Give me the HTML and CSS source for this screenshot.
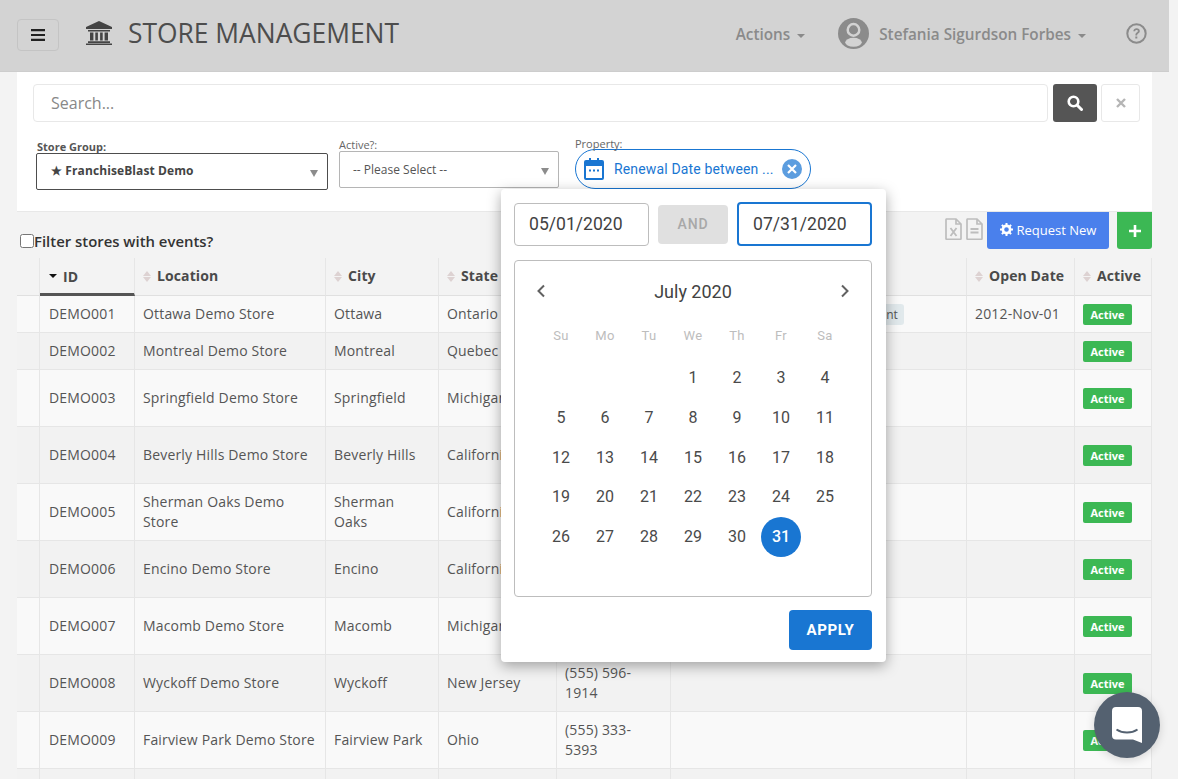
FILE: index.html
```html
<!DOCTYPE html>
<html lang="en">
<head>
<meta charset="utf-8">
<title>Store Management</title>
<link rel="stylesheet" href="styles.css">
</head>
<body>
<div class="page">
  <header class="topbar">
    <button class="menu-btn" type="button" aria-label="Menu">
      <svg width="14" height="12" viewBox="0 0 14 12"><path d="M0 0h14v2.2H0zM0 4.9h14v2.2H0zM0 9.8h14V12H0z" fill="#222"/></svg>
    </button>
    <svg class="bank-icon" width="26" height="24" viewBox="0 0 26 24"><path d="M13 0 26 6v2H0V6zM2 9h22v1.6H2zM4 11.5h3.4v8H4zM9.3 11.5h2.6v8H9.3zM14.1 11.5h2.6v8h-2.6zM18.6 11.5H22v8h-3.4zM2 20.3h22V22H2zM0 22.6h26V24H0z" fill="#444"/></svg>
    <h1 class="title">STORE MANAGEMENT</h1>
    <div class="nav-right">
      <span class="nav-link">Actions <i class="caret"></i></span>
      <span class="user">
        <svg width="31" height="31" viewBox="0 0 30 30"><circle cx="15" cy="15" r="15" fill="#8b8b8b"/><circle cx="15" cy="11.5" r="5.6" fill="none" stroke="#d3d3d3" stroke-width="2.4"/><ellipse cx="15" cy="23.5" rx="8" ry="4.3" fill="#d3d3d3"/></svg>
        <span class="nav-link">Stefania Sigurdson Forbes <i class="caret"></i></span>
      </span>
      <svg class="help" width="21" height="21" viewBox="0 0 21 21"><circle cx="10.5" cy="10.5" r="9.2" fill="none" stroke="#8b8b8b" stroke-width="2"/><path d="M7.3 8.2c.2-1.9 1.5-2.9 3.3-2.9 1.900 0 3.200 1.100 3.200 2.700 0 2.400-2.700 2.400-2.700 4.400H9.400c0-2.900 2.500-2.900 2.500-4.300 0-.7-.5-1.200-1.300-1.200-.9 0-1.300.5-1.500 1.300zM9.300 13.500h2v2.100h-2z" fill="#8b8b8b"/></svg>
    </div>
  </header>

  <section class="filters">
    <div class="search-row">
      <input class="search-input" type="text" placeholder="Search...">
      <button class="search-btn" type="button" aria-label="Search">
        <svg width="16" height="16" viewBox="0 0 16 16"><circle cx="6.500" cy="6.500" r="4.800" fill="none" stroke="#fff" stroke-width="2.600"/><path d="m10 10 4.500 4.500" stroke="#fff" stroke-width="3" stroke-linecap="round"/></svg>
      </button>
      <button class="clear-btn" type="button" aria-label="Clear">
        <svg width="10" height="10" viewBox="0 0 10 10"><path d="m1 1 8 8M9 1 1 9" stroke="#b5b5b5" stroke-width="2.400"/></svg>
      </button>
    </div>
    <div class="filter-row">
      <div class="filter filter-group">
        <label class="filter-label filter-label-bold">Store Group:</label>
        <div class="select select-dark">★ FranchiseBlast Demo<i class="select-caret"></i></div>
      </div>
      <div class="filter filter-active">
        <label class="filter-label">Active?:</label>
        <div class="select select-light">-- Please Select --<i class="select-caret"></i></div>
      </div>
      <div class="filter filter-property">
        <label class="filter-label">Property:</label>
        <div class="chip">
          <svg width="20" height="22" viewBox="0 0 20 22"><path d="M5 0h2v3H5zM13 0h2v3h-2z" fill="#1976d2"/><path d="M2 2h16a2 2 0 0 1 2 2v16a2 2 0 0 1-2 2H2a2 2 0 0 1-2-2V4a2 2 0 0 1 2-2zm0 6v12h16V8zM5 11.500h2v2H5zM9 11.500h2v2H9zM13 11.500h2v2h-2z" fill="#1976d2" fill-rule="evenodd"/></svg>
          <span class="chip-text">Renewal Date between ...</span>
          <span class="chip-close">
            <svg width="10" height="10" viewBox="0 0 10 10"><path d="m1 1 8 8M9 1 1 9" stroke="#fff" stroke-width="2.200"/></svg>
          </span>
        </div>
      </div>
    </div>
  </section>

  <div class="toolbar">
    <label class="event-filter"><input type="checkbox">Filter stores with events?</label>
    <div class="toolbar-actions">
      <svg class="file-icon" width="17" height="22" viewBox="0 0 17 22"><path d="M1.500 1h9.500l5 5v14.500a.8.8 0 0 1-.8.8H1.800a.8.8 0 0 1-.8-.8V1.800a.8.800 0 0 1 .5-.8zM11 1v5h5" fill="none" stroke="#bdbdbd" stroke-width="1.700"/><path d="m5.500 10 6 8M11.500 10l-6 8" stroke="#bdbdbd" stroke-width="1.800"/></svg>
      <svg class="file-icon" width="17" height="22" viewBox="0 0 17 22"><path d="M1.500 1h9.500l5 5v14.500a.8.8 0 0 1-.8.8H1.800a.8.8 0 0 1-.8-.8V1.800a.8.800 0 0 1 .5-.8zM11 1v5h5" fill="none" stroke="#bdbdbd" stroke-width="1.700"/><path d="M4.500 11h8M4.500 14.500h8" stroke="#bdbdbd" stroke-width="1.800"/></svg>
      <button class="request-btn" type="button">
        <svg width="13" height="13" viewBox="0 0 13 13"><circle cx="6.500" cy="6.500" r="3.600" fill="none" stroke="#fff" stroke-width="2.600"/><path d="M6.500 0v13M0 6.500h13M1.900 1.900l9.200 9.200M11.100 1.900l-9.200 9.200" stroke="#fff" stroke-width="2" stroke-dasharray="2.200 8.600"/></svg>
        Request New
      </button>
      <button class="add-btn" type="button" aria-label="Add">
        <svg width="12" height="12" viewBox="0 0 12 12"><path d="M6 0v12M0 6h12" stroke="#fff" stroke-width="2.600"/></svg>
      </button>
    </div>
  </div>

  <table class="stores">
    <colgroup>
      <col class="c0"><col class="c1"><col class="c2"><col class="c3"><col class="c4"><col class="c5"><col class="c6"><col class="c7"><col class="c8">
    </colgroup>
    <thead>
      <tr>
        <th></th>
        <th class="sorted"><i class="sort-down"></i>ID</th>
        <th><i class="sort"></i>Location</th>
        <th><i class="sort"></i>City</th>
        <th><i class="sort"></i>State</th>
        <th><i class="sort"></i>Phone</th>
        <th><i class="sort"></i>Tags</th>
        <th><i class="sort"></i>Open Date</th>
        <th><i class="sort"></i>Active</th>
      </tr>
    </thead>
    <tbody>
      <tr><td></td><td>DEMO001</td><td>Ottawa Demo Store</td><td>Ottawa</td><td>Ontario</td><td></td><td><span class="tag">Franchise Agreement</span></td><td>2012-Nov-01</td><td><span class="badge">Active</span></td></tr>
      <tr><td></td><td>DEMO002</td><td>Montreal Demo Store</td><td>Montreal</td><td>Quebec</td><td></td><td></td><td></td><td><span class="badge">Active</span></td></tr>
      <tr><td></td><td>DEMO003</td><td>Springfield Demo Store</td><td>Springfield</td><td>Michigan</td><td>(555) 412-7730</td><td></td><td></td><td><span class="badge">Active</span></td></tr>
      <tr><td></td><td>DEMO004</td><td>Beverly Hills Demo Store</td><td>Beverly Hills</td><td>California</td><td>(555) 208-1146</td><td></td><td></td><td><span class="badge">Active</span></td></tr>
      <tr><td></td><td>DEMO005</td><td>Sherman Oaks Demo Store</td><td>Sherman Oaks</td><td>California</td><td>(555) 733-9021</td><td></td><td></td><td><span class="badge">Active</span></td></tr>
      <tr><td></td><td>DEMO006</td><td>Encino Demo Store</td><td>Encino</td><td>California</td><td>(555) 640-2285</td><td></td><td></td><td><span class="badge">Active</span></td></tr>
      <tr><td></td><td>DEMO007</td><td>Macomb Demo Store</td><td>Macomb</td><td>Michigan</td><td>(555) 187-6402</td><td></td><td></td><td><span class="badge">Active</span></td></tr>
      <tr><td></td><td>DEMO008</td><td>Wyckoff Demo Store</td><td>Wyckoff</td><td>New Jersey</td><td>(555) 596-1914</td><td></td><td></td><td><span class="badge">Active</span></td></tr>
      <tr><td></td><td>DEMO009</td><td>Fairview Park Demo Store</td><td>Fairview Park</td><td>Ohio</td><td>(555) 333-5393</td><td></td><td></td><td><span class="badge">Active</span></td></tr>
      <tr class="row-empty"><td></td><td></td><td></td><td></td><td></td><td></td><td></td><td></td><td></td></tr>
    </tbody>
  </table>

  <div class="popup">
    <div class="range-row">
      <input class="date-input" type="text" value="05/01/2020">
      <span class="and">AND</span>
      <input class="date-input date-input-focus" type="text" value="07/31/2020">
    </div>
    <div class="calendar">
      <div class="cal-head">
        <svg width="10" height="14" viewBox="0 0 10 14"><path d="M8 1.500 2.500 7 8 12.500" fill="none" stroke="#616161" stroke-width="2"/></svg>
        <span class="cal-title">July 2020</span>
        <svg width="10" height="14" viewBox="0 0 10 14"><path d="M2 1.500 7.500 7 2 12.500" fill="none" stroke="#616161" stroke-width="2"/></svg>
      </div>
      <div class="weekdays"><span>Su</span><span>Mo</span><span>Tu</span><span>We</span><span>Th</span><span>Fr</span><span>Sa</span></div>
      <div class="days">
        <span></span><span></span><span></span><span>1</span><span>2</span><span>3</span><span>4</span>
        <span>5</span><span>6</span><span>7</span><span>8</span><span>9</span><span>10</span><span>11</span>
        <span>12</span><span>13</span><span>14</span><span>15</span><span>16</span><span>17</span><span>18</span>
        <span>19</span><span>20</span><span>21</span><span>22</span><span>23</span><span>24</span><span>25</span>
        <span>26</span><span>27</span><span>28</span><span>29</span><span>30</span><span class="day-selected">31</span><span></span>
      </div>
    </div>
    <div class="popup-foot"><button class="apply" type="button">APPLY</button></div>
  </div>

  <button class="chat" type="button" aria-label="Chat">
    <svg width="30" height="36" viewBox="0 0 30 36"><path d="M4 0h22a4 4 0 0 1 4 4v32l-9-3.500H4a4 4 0 0 1-4-4V4a4 4 0 0 1 4-4z" fill="#fff"/><path d="M4.500 22.500c6 4 15 4 21 0" fill="none" stroke="#546170" stroke-width="2"/></svg>
  </button>
</div>
</body>
</html>
```
FILE: styles.css
```css
* { box-sizing: border-box; }
html, body { margin: 0; height: 779px; overflow: hidden; }
body { background: #f3f3f3; font-family: "Open Sans", sans-serif; color: #555; font-size: 14px; }
.page { position: relative; width: 1178px; height: 779px; overflow: hidden; }
button { font-family: inherit; cursor: pointer; }

.topbar { width: 1169px; height: 72px; background: #d3d3d3; display: flex; align-items: center; padding: 0 22px 5px 17px; border-bottom: 1px solid #cdcdcd; }
.menu-btn { width: 42px; height: 32px; margin-top: 3px; background: transparent; border: 1px solid #c4c4c4; border-radius: 4px; display: flex; align-items: center; justify-content: center; padding: 0; }
.bank-icon { margin: 0 16px 0 27px; }
.title { margin: 0; font-size: 26.400px; font-weight: 400; color: #4d4d4d; }
.nav-right { margin-left: auto; display: flex; align-items: center; }
.nav-link { margin-top: 2px; font-size: 15.300px; font-weight: 600; color: #8a8a8a; white-space: nowrap; }
.caret { display: inline-block; width: 0; height: 0; margin-left: 3px; vertical-align: 2px; border-left: 4.500px solid transparent; border-right: 4.500px solid transparent; border-top: 4.500px solid #8a8a8a; }
.user { display: flex; align-items: center; gap: 10px; margin-left: 33px; }
.help { margin-left: 40px; }

.filters { width: 1135px; height: 140px; margin-left: 17px; background: #fff; border-bottom: 1px solid #e8e8e8; padding: 12px 12px 0 16px; }
.search-row { display: flex; }
.search-input { width: 1015px; height: 38px; border: 1px solid #e8e8e8; border-radius: 4px; padding: 0 17px; font: 16px "Open Sans", sans-serif; color: #555; }
.search-input::placeholder { color: #888; opacity: 1; }
.search-btn { width: 44px; height: 38px; margin-left: 5px; background: #555; border: 0; border-radius: 3px; display: flex; align-items: center; justify-content: center; padding: 0; }
.clear-btn { width: 39px; height: 38px; margin-left: 4px; background: #fff; border: 1px solid #e8e8e8; border-radius: 3px; display: flex; align-items: center; justify-content: center; padding: 0; }
.filter-row { display: flex; align-items: flex-start; margin-top: 22px; }
.filter-label { display: block; font-size: 11px; line-height: 12px; color: #666; white-space: nowrap; }
.filter-label-bold { font-weight: 700; color: #555; padding-left: 1px; }
.filter-group { width: 292px; margin-left: 3px; margin-top: -3px; }
.filter-active { width: 220px; margin-left: 11px; margin-top: -5px; }
.filter-property { margin-left: 16px; margin-top: -6px; }
.select { position: relative; display: flex; align-items: center; background: #fff; border-radius: 2px; padding-left: 14px; font-size: 11.500px; white-space: nowrap; }
.select-dark { height: 37px; padding-bottom: 2px; border: 1px solid #4d4d4d; font-size: 12px; font-weight: 700; color: #444; letter-spacing: .1px; }
.select-light { height: 37px; border: 1px solid #b5b5b5; padding-left: 13px; font-size: 12px; color: #555; }
.select-caret { position: absolute; right: 9px; top: 16px; border-left: 4px solid transparent; border-right: 4px solid transparent; border-top: 7px solid #8c8c8c; }
.chip { display: flex; align-items: center; width: 236px; height: 40px; margin-top: -1px; border: 1px solid #1976d2; border-radius: 20px; padding: 0 8px; font-family: Roboto, sans-serif; font-size: 14px; color: #1976d2; }
.chip-text { margin-left: 10px; white-space: nowrap; letter-spacing: .15px; }
.chip-close { width: 20px; height: 20px; margin-left: auto; border-radius: 50%; background: #5c9ddf; display: flex; align-items: center; justify-content: center; }

.toolbar { width: 1135px; height: 46px; margin-left: 17px; display: flex; justify-content: space-between; align-items: flex-start; }
.event-filter { display: flex; align-items: center; margin: 19px 0 0 3px; font-weight: 600; font-size: 14.900px; color: #333; white-space: nowrap; }
.event-filter input { width: 14px; height: 14px; margin: 0; }
.toolbar-actions { display: flex; align-items: flex-start; }
.file-icon { margin: 6px 4px 0 0; }
.request-btn { display: flex; align-items: center; justify-content: center; gap: 4px; width: 122px; height: 37px; margin-top: 0; background: #4a80ec; color: #fff; border: 0; border-radius: 0 0 3px 3px; font-size: 13px; padding: 0 0 2px; }
.add-btn { width: 35px; height: 37px; margin-left: 8px; background: #3cb854; border: 0; border-radius: 0 0 3px 3px; display: flex; align-items: center; justify-content: center; padding: 0; }

.stores { width: 1135px; margin-left: 17px; table-layout: fixed; border-collapse: separate; border-spacing: 0; }
.c0 { width: 23px; } .c1 { width: 95px; } .c2 { width: 191px; } .c3 { width: 113px; } .c4 { width: 118px; }
.c5 { width: 114px; } .c6 { width: 296px; } .c7 { width: 108px; } .c8 { width: 77px; }
.stores th { height: 38px; padding: 0 8px 2px; text-align: left; font-weight: 700; font-size: 14px; color: #4a4a4a; background: #f3f3f3; border-right: 1px solid #e6e6e6; border-bottom: 1px solid #e0e0e0; white-space: nowrap; letter-spacing: .1px; }
.stores th.sorted { border-bottom: 3px solid #555; padding: 2px 8px 0 9px; }
.stores td { padding: 8px 9px 8px 8px; line-height: 20px; font-size: 14px; color: #555; letter-spacing: .17px; border-right: 1px solid #e6e6e6; border-bottom: 1px solid #e6e6e6; vertical-align: middle; }
.stores td:nth-child(2) { padding-left: 9px; }
.stores tbody tr:nth-child(odd) td { background: #f9f9f9; }
.stores tbody tr:nth-child(even) td { background: #f2f2f2; }
.stores .row-empty td { height: 57px; }
.sort { display: inline-block; position: relative; width: 8px; height: 11px; margin-right: 6px; vertical-align: -1px; }
.sort::before, .sort::after { content: ""; position: absolute; left: 0; border-left: 4px solid transparent; border-right: 4px solid transparent; }
.sort::before { top: 0; border-bottom: 5px solid #ddd2d2; }
.sort::after { bottom: 0; border-top: 5px solid #ddd2d2; }
.sort-down { display: inline-block; width: 0; height: 0; margin-right: 6px; vertical-align: 4px; border-left: 4.500px solid transparent; border-right: 4.500px solid transparent; border-top: 4.500px solid #111; }
.tag { display: block; margin: -1px 53px -1px 100px; height: 21px; line-height: 21px; padding-right: 10px; background: #e1e9ec; border-radius: 3px; text-align: right; font-size: 12px; letter-spacing: 0; color: #555; white-space: nowrap; }
.badge { display: block; width: 49px; height: 21px; margin: -1px 0; line-height: 21px; background: #3cb854; border-radius: 2px; text-align: center; color: #fff; font-size: 11px; font-weight: 700; letter-spacing: 0; }

.popup { position: absolute; left: 501px; top: 189px; width: 385px; height: 473px; background: #fff; border-radius: 4px; box-shadow: 0 4px 14px rgba(0,0,0,.34); padding: 13px 14px 13px 13px; font-family: Roboto, sans-serif; }
.range-row { display: flex; align-items: center; justify-content: space-between; }
.date-input { width: 135px; height: 43px; border: 1px solid #bdbdbd; border-radius: 4px; padding: 0 14px; font: 17.600px Roboto, sans-serif; color: #424242; }
.date-input-focus { height: 44px; border: 2px solid #1976d2; }
.and { width: 70px; height: 39px; background: #e0e0e0; border-radius: 4px; display: flex; align-items: center; justify-content: center; font-size: 14px; font-weight: 500; letter-spacing: .8px; color: #a8a8a8; }
.calendar { height: 337px; margin-top: 14px; border: 1px solid #bdbdbd; border-radius: 4px; padding: 0 21px; }
.cal-head { display: flex; align-items: center; justify-content: space-between; height: 62px; padding: 0 0 2px; }
.cal-title { font-size: 18px; color: #424242; }
.weekdays, .days { display: grid; grid-template-columns: repeat(7, 44px); width: 308px; margin-left: 3px; }
.weekdays { height: 24px; align-items: center; text-align: center; font-size: 13px; color: #bdbdbd; letter-spacing: .4px; }
.days { grid-auto-rows: 39.700px; margin-top: 11px; font-size: 16px; color: #4a4a4a; }
.days span { display: flex; align-items: center; justify-content: center; }
.days .day-selected { width: 40px; height: 40px; justify-self: center; border-radius: 50%; background: #1976d2; color: #fff; font-weight: 500; }
.popup-foot { display: flex; justify-content: flex-end; margin-top: 13px; }
.apply { width: 83px; height: 40px; background: #1976d2; color: #fff; border: 0; border-radius: 4px; font-family: Roboto, sans-serif; font-size: 15px; font-weight: 700; letter-spacing: .6px; padding: 0; }

.chat { position: absolute; left: 1094px; top: 692px; width: 66px; height: 66px; border: 0; border-radius: 50%; background: #546170; box-shadow: 0 2px 10px rgba(0,0,0,.15); display: flex; align-items: center; justify-content: center; padding: 0 0 1px; }
```
